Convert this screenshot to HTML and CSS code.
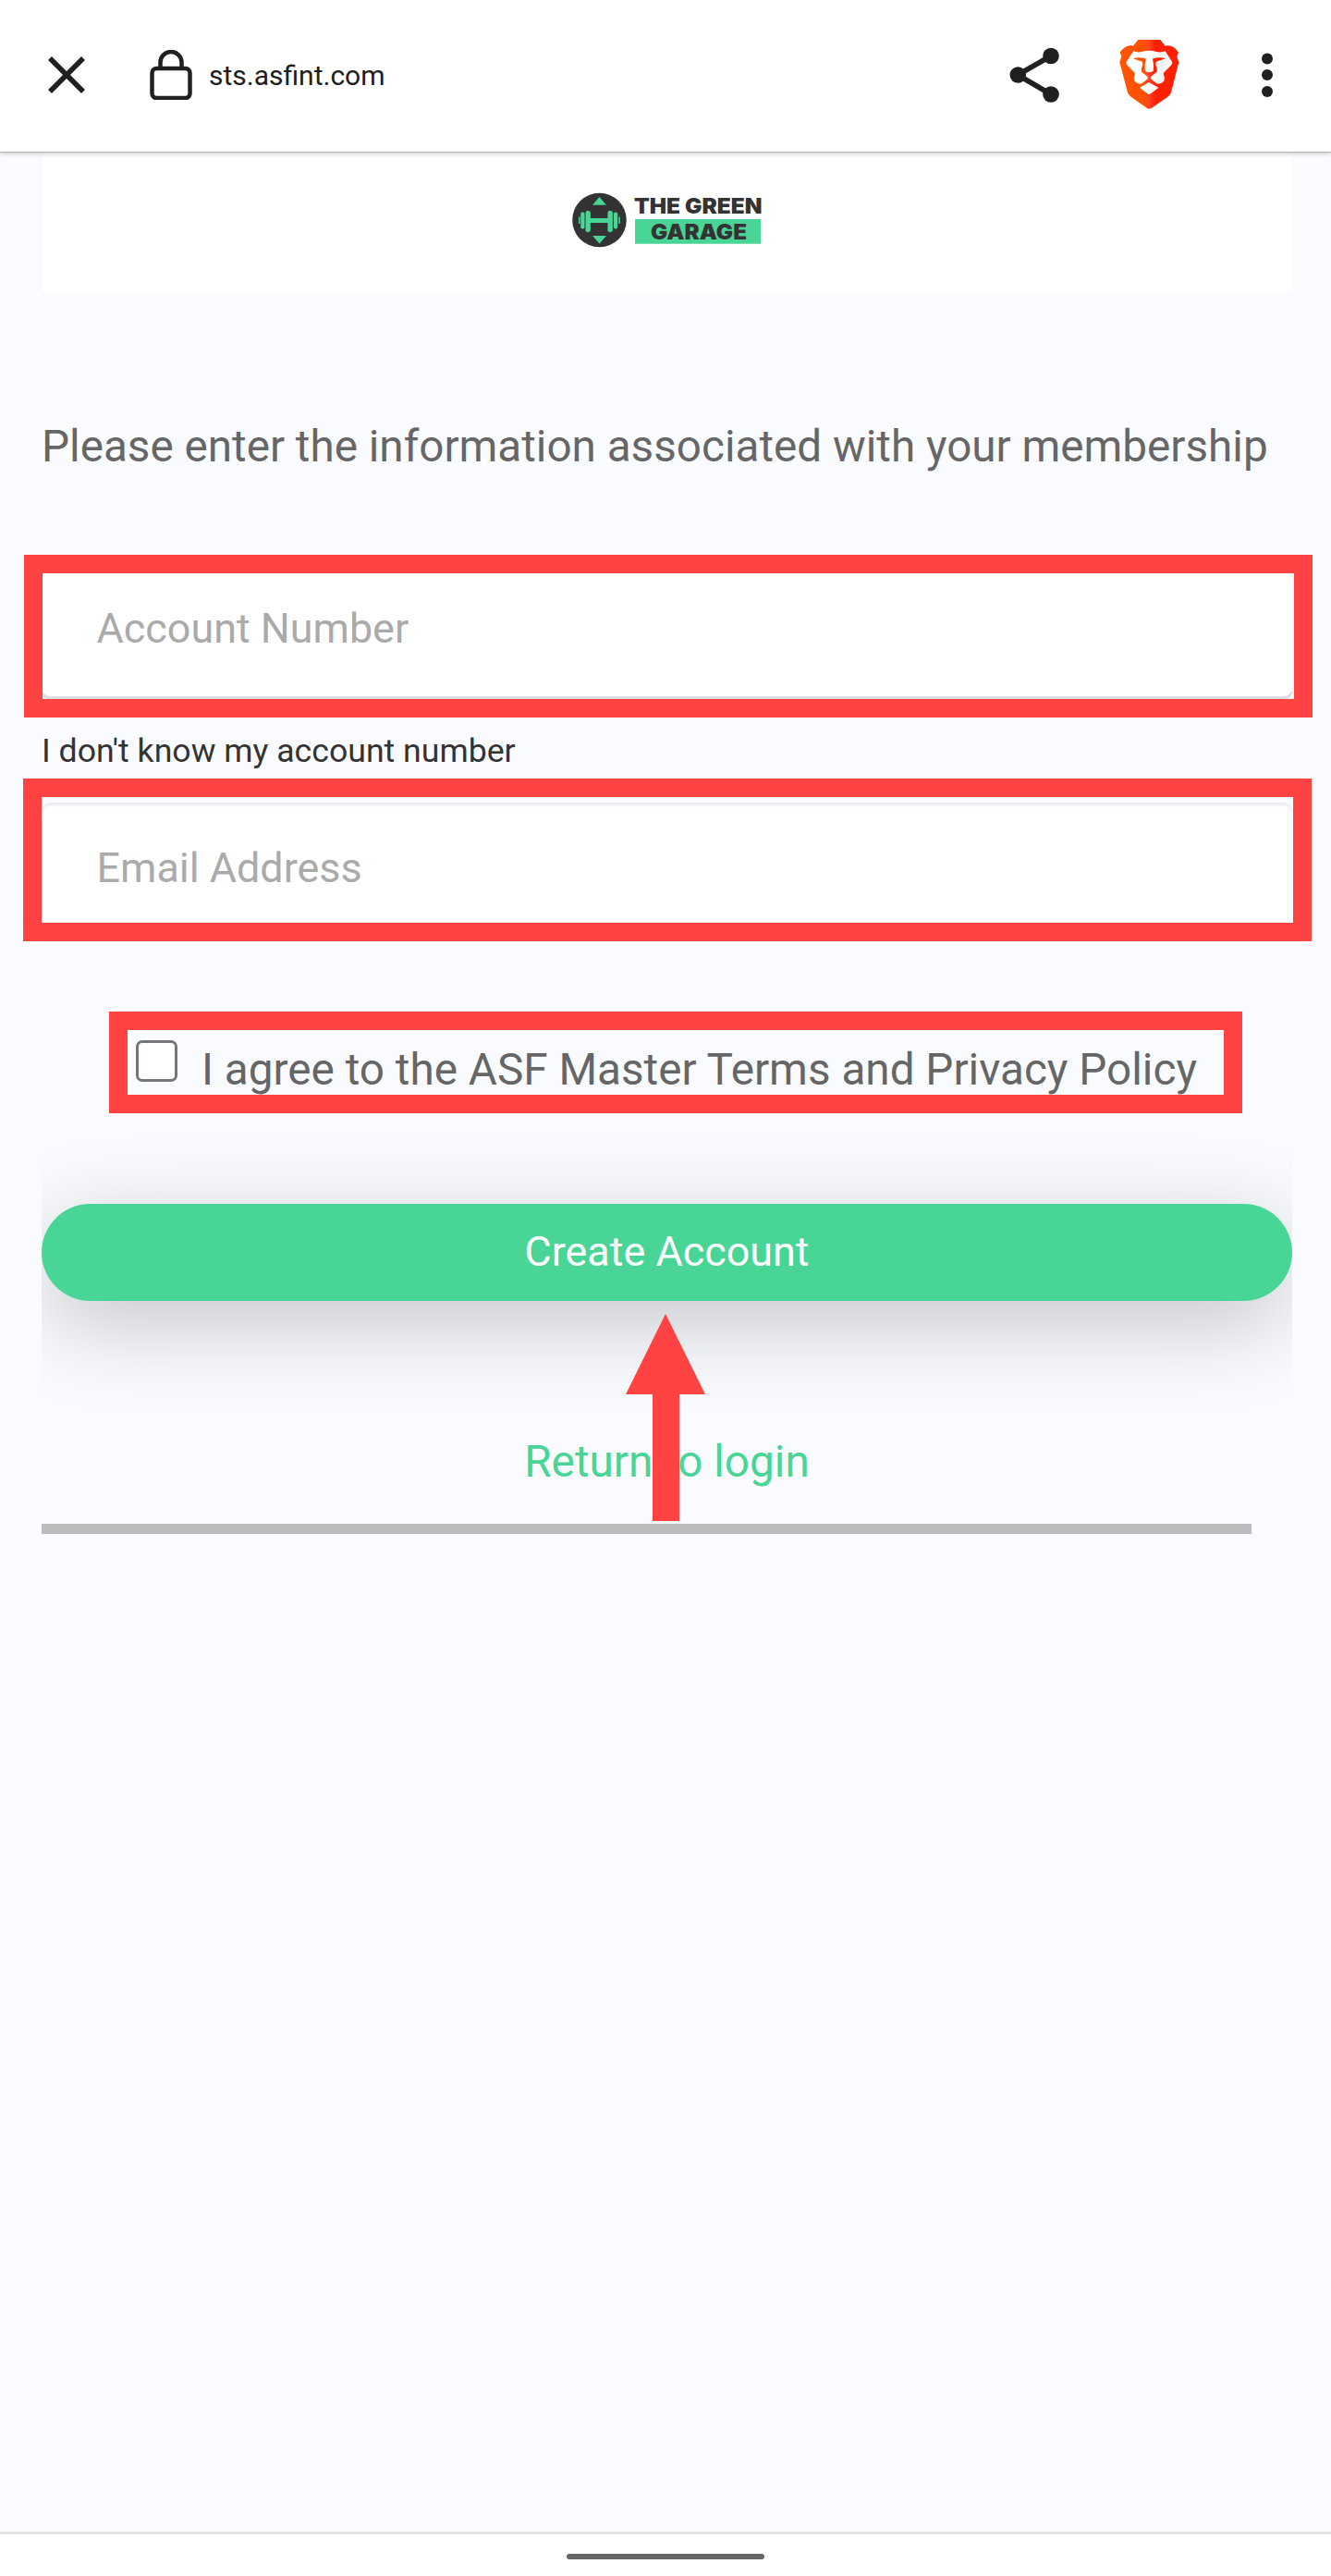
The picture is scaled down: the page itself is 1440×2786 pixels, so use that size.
FILE: index.html
```html
<!DOCTYPE html>
<html lang="en">
<head>
<meta charset="utf-8">
<title>Create Account</title>
<link rel="stylesheet" href="styles.css">
</head>
<body>
<header class="browser-bar">
  <svg class="icon-close" viewBox="0 0 42 42"><path d="M3 3L39 39M39 3L3 39"/></svg>
  <svg class="icon-lock" viewBox="0 0 46 54"><rect x="2.5" y="20" width="41" height="32" rx="5"/><path d="M11.5 20V13.500a11.500 11.500 0 0 1 23 0V20"/></svg>
  <span class="url">sts.asfint.com</span>
  <svg class="icon-share" viewBox="0 0 54 60"><path d="M45 9.500L9 30L45 51"/><circle cx="45" cy="9.500" r="8.800"/><circle cx="9.300" cy="30" r="8.800"/><circle cx="45" cy="51" r="8.800"/></svg>
  <svg class="icon-brave" viewBox="450 126 198 231">
    <defs>
      <linearGradient id="mane" gradientUnits="userSpaceOnUse" x1="454" y1="0" x2="646" y2="0">
        <stop offset="0" stop-color="#ff5601"/><stop offset=".42" stop-color="#ff5000"/><stop offset=".49" stop-color="#ff452a"/><stop offset=".6" stop-color="#ff2000"/><stop offset="1" stop-color="#ff2000"/>
      </linearGradient>
      <linearGradient id="face" gradientUnits="userSpaceOnUse" x1="475" y1="0" x2="625" y2="0">
        <stop offset=".45" stop-color="#fff"/><stop offset=".8" stop-color="#f1f1f2"/><stop offset="1" stop-color="#fff"/>
      </linearGradient>
    </defs>
    <path fill="url(#mane)" d="M514 129H586L602 149C616 145 630 149 645 170L640 183L646 202L621 300Q618 309 609 315L557 351Q550 356 543 351L492 315Q483 309 480 300L454 202L460 183L455 170C470 149 484 145 498 149Z"/>
    <path fill="url(#face)" d="M499 166Q512 171 526 168Q549 160 574 168Q588 171 602 166L625 202Q625 208 620 213L599 234Q595 238 597 243Q602 255 597 264Q588 273 577 272Q572 270 550 251Q528 270 523 272Q512 273 503 264Q498 255 503 243Q505 238 501 234L480 213Q475 208 475 202Z"/>
    <path fill="url(#face)" d="M519 284L549 267L580 284Q576 288 554 304Q549 308 545 304Q523 288 519 284Z"/>
    <path fill="url(#mane)" d="M498 190Q515 184 538 190L539 195Q534 207 537 231Q550 238 563 231Q566 207 561 195L562 190Q585 184 602 190Q588 196 575 199Q570 202 571 210L575 222Q577 230 574 234L555 249V254H545V249L526 234Q523 230 525 222L529 210Q530 202 525 199Q512 196 498 190Z"/>
  </svg>
  <svg class="icon-menu" viewBox="0 0 14 50"><circle cx="7" cy="7.500" r="6"/><circle cx="7" cy="25" r="6"/><circle cx="7" cy="43" r="6"/></svg>
</header>

<main class="page">
  <section class="logo-card">
    <svg class="logo" viewBox="600 190 240 90">
      <circle cx="648.500" cy="238" r="29.300" fill="#333"/>
      <g fill="#48d595">
        <path d="M648.500 213L656 221.700H641Z"/><path d="M648.500 263.500L656 255H641Z"/>
        <rect x="638" y="236" width="21" height="5"/>
        <rect x="633.500" y="228" width="5.300" height="23" rx="2"/><rect x="657.500" y="228" width="5.300" height="23" rx="2"/>
        <rect x="628.300" y="229.500" width="4.200" height="18" rx="1.800"/><rect x="664" y="229.500" width="4.200" height="18" rx="1.800"/>
        <rect x="626" y="234.500" width="1.500" height="7.500"/><rect x="669.300" y="234.500" width="1.500" height="7.500"/>
        <rect x="687" y="237" width="136" height="26.700"/>
      </g>
      <g class="logo-text">
        <text x="686" y="231" textLength="138.500" lengthAdjust="spacingAndGlyphs">THE GREEN</text>
        <text x="704" y="259" textLength="104" lengthAdjust="spacingAndGlyphs">GARAGE</text>
      </g>
    </svg>
  </section>

  <p class="intro">Please enter the information associated with your membership</p>

  <form class="form">
    <div class="field field-account">
      <input class="input" type="text" placeholder="Account Number">
      <i class="marker"></i>
    </div>
    <a class="hint">I don't know my account number</a>
    <div class="field field-email">
      <input class="input" type="text" placeholder="Email Address">
      <i class="marker"></i>
    </div>
    <label class="agree"><span class="checkbox"></span><span class="agree-text">I agree to the ASF Master Terms and Privacy Policy</span></label>
    <div class="submit-row"><button class="submit" type="button">Create Account</button></div>
    <div class="return-row">
      <a class="return">Return to login</a>
      <svg class="arrow" viewBox="0 0 88 226"><path d="M44 1L87 88H59V225H30V88H1Z"/></svg>
    </div>
  </form>
  <hr class="rule">
</main>

<footer class="nav-bar"><span class="pill"></span></footer>
</body>
</html>
```
FILE: styles.css
```css
* { box-sizing: border-box; }
body {
  margin: 0;
  height: 2786px;
  display: flex;
  flex-direction: column;
  background: #f9fbff;
  font-family: Roboto, "Liberation Sans", sans-serif;
  overflow: hidden;
}
svg { display: block; flex: none; }

/* Browser toolbar */
.browser-bar {
  flex: none;
  position: relative;
  z-index: 1;
  height: 164px;
  padding: 0 62px 3px 50.500px;
  display: flex;
  align-items: center;
  background: #fff;
  box-shadow: 0 1px 0 #b3b4b6, 0 2px 5px rgba(0, 0, 0, .22);
}
.icon-close { width: 42px; height: 42px; fill: none; stroke: #202020; stroke-width: 5.6; }
.icon-lock { width: 46px; height: 54px; margin-left: 69px; fill: none; stroke: #202020; stroke-width: 4.500; }
.url { margin: 3px auto 0 18.500px; font-size: 30px; line-height: 36px; color: #202020; }
.icon-share { width: 54px; height: 60px; fill: #202020; }
.icon-share path { fill: none; stroke: #202020; stroke-width: 5.600; }
.icon-brave { width: 66px; height: 77px; margin-left: 63.500px; }
.icon-menu { width: 14px; height: 50px; margin-left: 88.500px; fill: #202020; }

/* Page */
.page { flex: 1; padding: 0 42px 0 45px; }
.logo-card {
  height: 152px;
  padding: 26px 0 0 555px;
  background: #fff;
  border-radius: 9px 9px 0 0;
}
.logo { width: 240px; height: 90px; }
.logo-text { fill: #333; font-family: Inter, sans-serif; font-weight: 900; font-size: 22.500px; }
.intro {
  margin: 89px 0 0;
  height: 156px;
  padding-top: 50px;
  background: #fafbfe;
  color: #666;
  font-size: 47.650px;
  line-height: 56px;
  white-space: nowrap;
}
.form { display: flex; flex-direction: column; }
.field { position: relative; height: 134px; }
.field-account { margin-top: 58px; }
.input {
  display: block;
  width: 100%;
  height: 100%;
  border: 0;
  border-radius: 9px;
  padding: 0 59.500px;
  background: #fff;
  font: 44.900px Roboto, sans-serif;
  outline: 0;
}
.field-account .input { padding-bottom: 13px; box-shadow: 0 4px 0 #dcdfdf; }
.field-email .input { padding-top: 7px; box-shadow: inset 0 3px 3px #e9ebeb; }
.input::placeholder { color: #aaa; opacity: 1; }
.marker { position: absolute; border: 20px solid #ff4242; width: 1394px; height: 176px; }
.field-account .marker { left: -19px; top: -19px; }
.field-email .marker { left: -20px; top: -26px; }
.hint { margin-top: 38px; height: 42px; font-size: 35.650px; line-height: 42px; color: #333; }
.field-email { margin-top: 35px; }
.agree {
  width: 1226px;
  height: 110px;
  margin: 92px 0 0 73px;
  border: 20px solid #ff4242;
  padding: 11px 0 0 9px;
  display: flex;
  align-items: flex-start;
}
.checkbox { flex: none; width: 45px; height: 45px; border: 3px solid #767676; border-radius: 7px; background: #fff; }
.agree-text { margin: 4px 0 0 26px; font-size: 47.700px; line-height: 56px; color: #666; white-space: nowrap; }
.submit-row { margin-top: 98px; clip-path: inset(-200px 0); }
.submit {
  display: block;
  width: 100%;
  height: 105px;
  border: 0;
  border-radius: 53px;
  padding: 0 0 2px;
  background: #48d595;
  color: #fff;
  font: 44.900px/103px Roboto, sans-serif;
  box-shadow: 0 24px 96px rgba(0, 0, 0, .22);
}
.return-row { position: relative; margin-top: 145px; display: flex; justify-content: center; }
.return { padding-top: 1px; font-size: 47.700px; line-height: 56px; color: #48d595; }
.arrow { position: absolute; left: 631px; top: -132px; width: 88px; height: 226px; fill: #ff4242; }
.rule { margin: 39px 44px 0 0; height: 11px; border: 0; background: #bbbcbe; }

/* System navigation */
.nav-bar { flex: none; height: 48px; border-top: 3px solid #e1e4e3; background: #fff; display: flex; justify-content: center; padding-top: 21px; }
.pill { width: 214px; height: 6px; border-radius: 3px; background: #666; }
```
